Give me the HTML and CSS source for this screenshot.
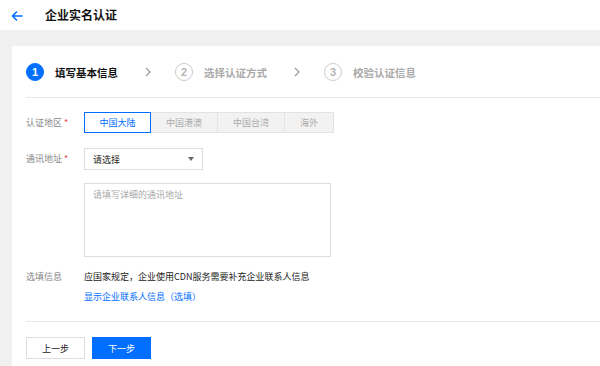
FILE: index.html
```html
<!DOCTYPE html>
<html lang="zh">
<head>
<meta charset="utf-8">
<link rel="stylesheet" href="styles.css">
</head>
<body>
<header class="topbar">
  <svg class="back" width="12" height="10" viewBox="0 0 12 10"><path d="M11 5H1.5M5.5 1L1.5 5l4 4" fill="none" stroke="#006eff" stroke-width="1.6" stroke-linecap="round" stroke-linejoin="round"/></svg>
  <h1 class="title">企业实名认证</h1>
</header>
<main class="page">
  <section class="card">
    <div class="steps">
      <div class="step active"><span class="num">1</span><span class="label">填写基本信息</span></div>
      <svg class="chev" width="6" height="10" viewBox="0 0 6 10"><path d="M1 1l4 4-4 4" fill="none" stroke="#999" stroke-width="1.2"/></svg>
      <div class="step"><span class="num">2</span><span class="label">选择认证方式</span></div>
      <svg class="chev" width="6" height="10" viewBox="0 0 6 10"><path d="M1 1l4 4-4 4" fill="none" stroke="#999" stroke-width="1.2"/></svg>
      <div class="step"><span class="num">3</span><span class="label">校验认证信息</span></div>
    </div>
    <div class="form">
      <div class="row">
        <div class="lbl">认证地区<span class="req">*</span></div>
        <div class="seg">
          <span class="opt sel">中国大陆</span>
          <span class="opt">中国港澳</span>
          <span class="opt">中国台湾</span>
          <span class="opt short">海外</span>
        </div>
      </div>
      <div class="row r2">
        <div class="lbl">通讯地址<span class="req">*</span></div>
        <div class="select"><span>请选择</span><span class="caret"></span></div>
      </div>
      <div class="row r3">
        <div class="lbl"></div>
        <div class="textarea">请填写详细的通讯地址</div>
      </div>
      <div class="row r4">
        <div class="lbl">选填信息</div>
        <div class="info">
          <p class="note">应国家规定，企业使用CDN服务需要补充企业联系人信息</p>
          <a class="link">显示企业联系人信息（选填）</a>
        </div>
      </div>
    </div>
    <div class="actions">
      <button class="btn">上一步</button>
      <button class="btn primary">下一步</button>
    </div>
  </section>
</main>
</body>
</html>
```
FILE: styles.css
```css
* { box-sizing: border-box; }
html, body { margin: 0; height: 100%; }
body {
  font-family: "Noto Sans CJK SC", "Liberation Sans", sans-serif;
  background: #f0f0f0;
  color: #000;
  overflow: hidden;
}
.topbar {
  height: 30px;
  background: #fff;
  display: flex;
  align-items: center;
  padding-left: 11px;
}
.back { display: block; margin-top: 1px; }
.title {
  margin: 0 0 0 22px;
  font-size: 12px;
  font-weight: bold;
  line-height: 1;
  color: #111;
}
.page {
  padding: 16px 0 0 12px;
  height: 336px;
}
.card {
  background: #fff;
  height: 100%;
  padding-left: 14px;
}
.steps {
  height: 52px;
  display: flex;
  align-items: center;
  border-bottom: 1px solid #e6e6e6;
  padding-top: 1px;
}
.step { display: flex; align-items: center; }
.num {
  width: 18px;
  height: 18px;
  border-radius: 50%;
  border: 1.5px solid #ccc;
  color: #b5b5b5;
  font-family: "Liberation Sans", sans-serif;
  font-size: 11px;
  font-weight: bold;
  display: flex;
  align-items: center;
  justify-content: center;
}
.step.active .num { background: #006eff; border-color: #006eff; color: #fff; }
.label {
  margin-left: 11px;
  font-size: 10.5px;
  color: #aaa;
  font-weight: bold;
}
.step.active .label { color: #111; }
.chev { margin: 0 24px 0 27px; display: block; }
.form { padding-top: 14px; }
.row { display: flex; align-items: flex-start; }
.lbl {
  width: 58px;
  font-size: 9px;
  color: #888;
  line-height: 21px;
  flex: none;
}
.req { color: #e54545; margin-left: 2px; }
.seg { display: flex; height: 21px; }
.opt {
  width: 67px;
  height: 21px;
  font-size: 9px;
  color: #aaa;
  background: #f2f2f2;
  border: 1px solid #e3e3e3;
  border-left: none;
  display: flex;
  align-items: center;
  justify-content: center;
}
.opt.sel {
  background: #fff;
  color: #006eff;
  border: 1px solid #006eff;
}
.opt.short { width: 49px; }
.r2 { margin-top: 15px; }
.r2 .lbl { line-height: 22px; }
.select {
  width: 119px;
  height: 22px;
  border: 1px solid #ddd;
  display: flex;
  align-items: center;
  justify-content: space-between;
  padding: 0 8px 0 8px;
  font-size: 9px;
  color: #222;
}
.caret {
  width: 0; height: 0;
  border-left: 3px solid transparent;
  border-right: 3px solid transparent;
  border-top: 4px solid #666;
}
.r3 { margin-top: 13px; }
.textarea {
  width: 247px;
  height: 74px;
  border: 1px solid #ddd;
  padding: 4px 8px;
  font-size: 9px;
  color: #aaa;
  line-height: 13px;
}
.r4 { margin-top: 13px; }
.r4 .lbl { line-height: 14px; }
.info { font-size: 9px; line-height: 14px; }
.note { margin: 0; color: #222; }
.link { display: block; margin-top: 6px; color: #006eff; }
.actions {
  margin-top: 17px;
  border-top: 1px solid #e6e6e6;
  padding-top: 15px;
  display: flex;
  gap: 7px;
}
.btn {
  width: 59px;
  height: 22px;
  font-family: inherit;
  font-size: 9px;
  border: 1px solid #ddd;
  background: #fff;
  color: #222;
  padding: 0;
}
.btn.primary { background: #006eff; border-color: #006eff; color: #fff; }
```
